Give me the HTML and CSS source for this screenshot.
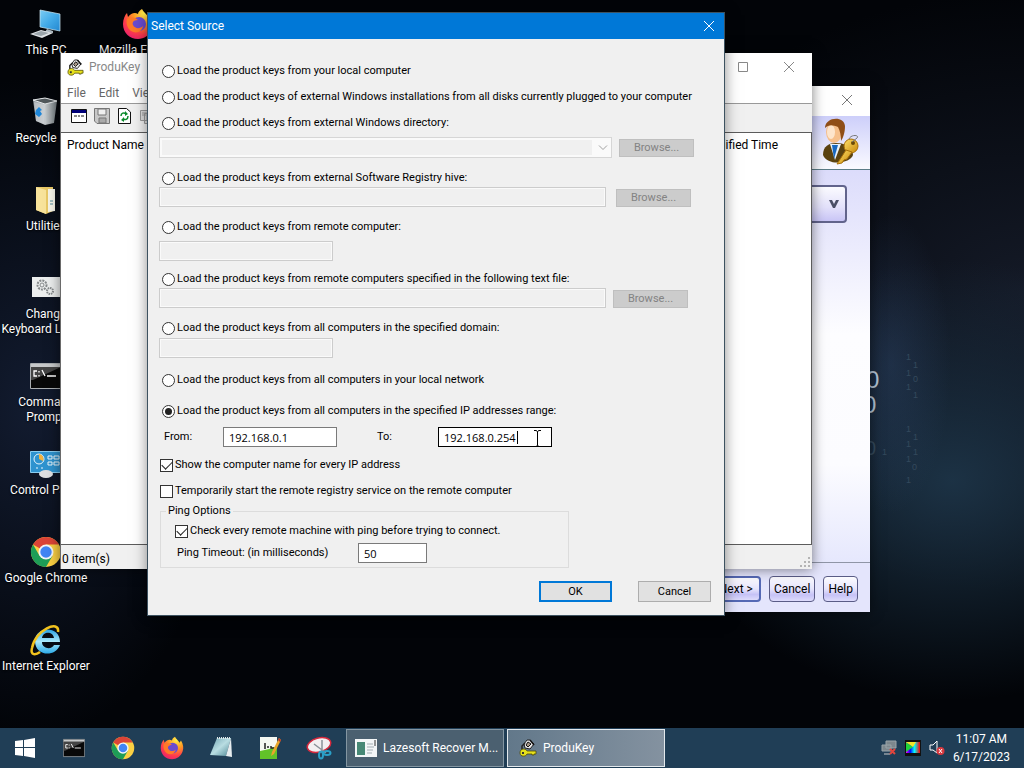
FILE: index.html
```html
<!DOCTYPE html>
<html lang="en">
<head>
<meta charset="utf-8">
<title>Select Source</title>
<meta name="viewport" content="width=device-width, initial-scale=1">
<link rel="stylesheet" href="styles.css">
</head>
<body>
<svg class="defs" width="0" height="0" aria-hidden="true">
  <defs>
    <linearGradient id="screen" x1="0" y1="0" x2="1" y2="1"><stop offset="0" stop-color="#7ccdf4"/><stop offset=".5" stop-color="#43abe8"/><stop offset="1" stop-color="#2387d0"/></linearGradient>
    <radialGradient id="fire" cx=".7" cy=".15" r="1"><stop offset="0" stop-color="#fff04a"/><stop offset=".35" stop-color="#ff9a22"/><stop offset=".7" stop-color="#ff3b4c"/><stop offset="1" stop-color="#e21a78"/></radialGradient>
    <linearGradient id="bin" x1="0" x2="1"><stop offset="0" stop-color="#8f979d"/><stop offset=".5" stop-color="#c5cacd"/><stop offset="1" stop-color="#6f777c"/></linearGradient>
    <linearGradient id="note" x1="0" y1="0" x2="1" y2="1"><stop offset="0" stop-color="#6fa2b0"/><stop offset=".5" stop-color="#b9dde2"/><stop offset="1" stop-color="#4d8794"/></linearGradient>
    <linearGradient id="gold" x1="0" y1="0" x2="1" y2="1"><stop offset="0" stop-color="#ffe26b"/><stop offset="1" stop-color="#c88708"/></linearGradient>
    <linearGradient id="ie" x1="0" y1="0" x2="0" y2="1"><stop offset="0" stop-color="#2aa3e4"/><stop offset=".5" stop-color="#a9e8fb"/><stop offset="1" stop-color="#2ba9e6"/></linearGradient>
    <linearGradient id="rainbow"><stop offset="0" stop-color="#f0f"/><stop offset=".3" stop-color="#00f"/><stop offset=".6" stop-color="#0ff"/><stop offset="1" stop-color="#f00"/></linearGradient>
    <symbol id="i-chrome" viewBox="0 0 32 32">
      <circle cx="16" cy="16" r="15" fill="#fbd043"/>
      <path d="M16 16 3 8.500A15 15 0 0 1 29 8.500H16Z" fill="#dc4437"/>
      <path d="M3 8.500A15 15 0 0 0 16 31L22.500 19.800 9.500 19.800Z" fill="#1e9d57"/>
      <circle cx="16" cy="16" r="7.500" fill="#f4f6f7"/><circle cx="16" cy="16" r="5.700" fill="#4285f4"/>
    </symbol>
    <symbol id="i-firefox" viewBox="0 0 32 32">
      <path d="M20 1c1 3 5 5 6 8l2-3c3 5 4 10 2 15-2 6-8 10-14 10C8 31 1 25 1 16 1 11 3 7 5 5l1 4c3-4 7-5 10-3 0-2 2-4 4-5Z" fill="url(#fire)"/>
      <circle cx="17" cy="16" r="7" fill="#6a4bd0"/>
      <path d="M5 11c4-3 8-2 11 1-5 0-6 3-5 5 2 4 7 4 10 1-1 6-7 8-12 5-4-3-5-8-4-12Z" fill="#ff7a28"/>
    </symbol>
    <symbol id="i-cmd" viewBox="0 0 32 26">
      <path fill="#080808" stroke="#a9adb0" d="M.5.5h31v25H.5z"/><path fill="#c7c9ca" d="M1 1h30v3H1z"/><path d="M1 4h30L3 17H1z" fill="#444"/>
      <path d="M7 8H4v5h3M9 8v1.500M9 12v1.500M12 7l3 6M17 13h9" fill="none" stroke="#fff" stroke-width="1.300"/>
    </symbol>
    <symbol id="i-key" viewBox="0 0 18 18">
      <path d="M8 1h3l4 4-4 5-5-1-1-4Z" fill="#e8e8e8" stroke="#222"/><path d="m9 3 3 2-3 3-2-2Z" fill="#a98" stroke="#111"/><path d="M6 4 3 7v4" fill="none" stroke="#222" stroke-width="1.500"/><path d="m11 1 4 5" stroke="#111" stroke-width="1.500"/>
      <path d="M4.500 10c2 0 3 1 3.500 2h9v3h-2v1h-2v-1H8c-1 3-7 3-7-1 0-2 1-4 3.500-4Z" fill="#e6e01b" stroke="#4f4a05" stroke-width=".8"/><path d="M3 13h2v2H3z" fill="#333"/>
    </symbol>
    <symbol id="i-close" viewBox="0 0 12 12"><path d="m1 1 10 10M11 1 1 11" fill="none" stroke="currentColor"/></symbol>
  </defs>
</svg>

<main class="desktop">
  <svg class="code-rain" width="70" height="180" viewBox="0 0 70 180" aria-hidden="true">
    <g fill="#b4c4d6"><text x="-4" y="36" font-size="24">0</text><text x="-7" y="61" font-size="24">0</text></g>
    <g fill="#34495c" font-size="9"><text x="-5" y="103" font-size="20">0</text><text x="12" y="103">1</text><text x="36" y="8">1</text><text x="43" y="16">1</text><text x="36" y="24">1</text><text x="43" y="30">0</text><text x="36" y="38">1</text><text x="43" y="46">1</text><text x="36" y="80">1</text><text x="43" y="88">1</text><text x="36" y="95">1</text><text x="43" y="103">1</text><text x="36" y="110">1</text><text x="42" y="118">0</text><text x="36" y="131">1</text></g>
  </svg>

  <nav class="shortcuts" aria-label="Desktop">
    <a class="shortcut" href="#"><svg width="32" height="32" viewBox="0 0 32 32"><path d="m10 2 20 4v17l-20-4Z" fill="url(#screen)" stroke="#cfe9f5" stroke-width=".7"/><path d="m17 21 6 2v2l-8-1Z" fill="#aab7bf"/><path d="m0 26 11-4 12 3-11 5Z" fill="#dfe3e6"/><path d="m3 26 8-3 8 2-8 3Z" fill="#9ba5ab"/></svg><span>This PC</span></a>
    <a class="shortcut" href="#"><svg width="32" height="32" viewBox="0 0 32 32"><path d="m3 4 12-2 12 3-3 22-9 2-9-4Z" fill="url(#bin)"/><path d="m3 4 12-2 12 3-12 3Z" fill="#50575b" stroke="#e2e5e7"/><path d="m15 9-1 19-8-3L4 6Z" fill="#d3d7da" opacity=".55"/><path d="m6 14 3-3 3 3-2 1 2 3-3 3-4-3Z" fill="#1e86d8"/></svg><span>Recycle Bin</span></a>
    <a class="shortcut" href="#"><svg width="32" height="32" viewBox="0 0 32 32"><path d="M6 3h17v24l-7 3-10-4Z" fill="#e9c967"/><path d="M6 3 16 6v24L6 26Z" fill="#f8e39b"/><path d="M18 5h7v22l-7 1Z" fill="#f6f4e8"/><path d="M20 17h3M20 20h3" stroke="#528a9a"/></svg><span>Utilities</span></a>
    <a class="shortcut" href="#"><svg width="32" height="32" viewBox="0 0 32 32"><path d="M2 5h30v20H2z" fill="#eceeee"/><g fill="none" stroke="#85898b"><circle cx="12" cy="13" r="4.500" stroke-width="2" stroke-dasharray="2 1"/><circle cx="12" cy="13" r="2"/><circle cx="20" cy="19" r="3" stroke-width="2" stroke-dasharray="1.500 .8"/></g></svg><span>Change Keyboard Layout</span></a>
    <a class="shortcut" href="#"><svg width="32" height="32"><use href="#i-cmd"/></svg><span>Command Prompt</span></a>
    <a class="shortcut" href="#"><svg width="32" height="32" viewBox="0 0 32 32"><path d="M.5 3.500h31v21H.5z" fill="#2e93cf" stroke="#8acdf0"/><circle cx="9" cy="11" r="5" fill="none" stroke="#e8f5fc"/><path d="M9 11V6a5 5 0 0 1 4 7Z" fill="#f3b23c"/><path d="M18 8h4v3h-4zM24 8h5v3h-5zM18 14h4v3h-4zM24 14h5v3h-5zM6 20h2M11 20h2" fill="none" stroke="#eaf6fc"/><ellipse cx="16" cy="26" rx="7" ry="4" fill="#dfe1e2"/></svg><span>Control Panel</span></a>
    <a class="shortcut" href="#"><svg width="32" height="32"><use href="#i-chrome"/></svg><span>Google Chrome</span></a>
    <a class="shortcut" href="#"><svg width="32" height="32" viewBox="0 0 32 32"><path d="M30 18H12c0 7 10 8 12 3h6c-5 13-25 11-25-4C5 2 30 1 30 18ZM12 14h12c-1-7-11-7-12 0Z" fill="url(#ie)"/><path d="M28 8C30-5 5 6 2 24c-2 8 4 7 8 4" fill="none" stroke="#f1c21e" stroke-width="2.500"/></svg><span>Internet Explorer</span></a>
    <a class="shortcut" href="#"><svg width="32" height="32"><use href="#i-firefox"/></svg><span>Mozilla Firefox</span></a>
  </nav>

  <section class="window wizard" aria-label="Lazesoft Recover My Password">
    <header class="wizard-title"><button class="caption-btn" aria-label="Close"><svg width="12" height="12"><use href="#i-close"/></svg></button></header>
    <div class="wizard-banner">
      <svg width="40" height="48" viewBox="0 0 40 48"><path d="M3 38c0-9 6-12 13-12s17 3 17 12c-2 8-25 12-30 0Z" fill="#5b4310"/><path d="m10 27 5 16 6-16Z" fill="#e8f2fb"/><path d="m12 28 2 14 4-14Z" fill="#1768c0"/><ellipse cx="14" cy="15" rx="8" ry="11" fill="#f6c08c"/><ellipse cx="11" cy="15" rx="4" ry="7" fill="#fde5cc"/><path d="M5 11C5 0 24-2 25 9c0 7-2 12-4 15 0-6-1-10-3-14C13 8 9 7 5 11Z" fill="#8f4e17"/><circle cx="31" cy="29" r="7" fill="url(#gold)" stroke="#a86f08"/><path d="m26 33-9 14 5-1 2-3 3-1 5-7Z" fill="url(#gold)" stroke="#a86f08"/><circle cx="33" cy="26" r="2" fill="#6b4a08"/><path d="M29 22c2-5 11-4 8-1l-5 4" fill="none" stroke="#777"/></svg>
    </div>
    <div class="wizard-body"><button class="wizard-select" aria-label="Choose volume"><svg width="12" height="10" viewBox="0 0 12 10"><path d="M1 1h3l2 4 2-4h3L7 9H5Z" fill="#4b4f66"/></svg></button></div>
    <footer class="wizard-footer"><button class="wiz-btn wiz-default">Next &gt;</button><button class="wiz-btn">Cancel</button><button class="wiz-btn">Help</button></footer>
  </section>

  <section class="window produkey" aria-label="ProduKey">
    <header class="pk-title"><svg width="17" height="17"><use href="#i-key"/></svg><h2>ProduKey</h2>
      <button class="caption-btn" aria-label="Maximize"><svg width="12" height="12"><path d="M1.500 1.500h9v9h-9z" fill="none" stroke="currentColor"/></svg></button>
      <button class="caption-btn" aria-label="Close"><svg width="12" height="12"><use href="#i-close"/></svg></button>
    </header>
    <nav class="pk-menu"><button>File</button><button>Edit</button><button>View</button></nav>
    <div class="pk-toolbar">
      <button aria-label="Select source"><svg width="16" height="16"><path d="M.5 1.500h15v13H.5z" fill="#fff" stroke="#111"/><path d="M1 2h14v3H1z" fill="#000078"/><path d="M3 8h3M7 8h2M10 8h3" stroke="#111"/></svg></button>
      <button aria-label="Save"><svg width="16" height="16"><path d="M.5.500h15v15H3l-2.500-2.500Z" fill="#c8c8c8" stroke="#777"/><path d="M4 1h8v6H4z" fill="#efefef" stroke="#777"/><path d="M5 10h7v5H5z" fill="#aaa" stroke="#777"/></svg></button>
      <button aria-label="Refresh"><svg width="16" height="16"><path d="M1.500.500h8l4 3.500v11.500h-12z" fill="#fff" stroke="#111"/><path d="M4 8c0-3 3-4 5-2M11 8c0 4-3 4-5 3" fill="none" stroke="#0a8a2a" stroke-width="1.500"/><path d="M8 3v5l3-2ZM7 9v5l-3-2Z" fill="#0a8a2a"/></svg></button>
      <button aria-label="Copy"><svg width="16" height="16"><path d="M.5 2.500h8v10h-8zM4.500 5.500h8v10h-8zM2 5h5M2 7h5M6 9h5M6 11h5" fill="#ddd" stroke="#999"/></svg></button>
    </div>
    <div class="pk-list"><table><thead><tr><th>Product Name</th><th>Modified Time</th></tr></thead></table></div>
    <footer class="pk-status"><span>0 item(s)</span><svg width="10" height="10"><path d="M8 0h2v2H8zM8 4h2v2H8zM8 8h2v2H8zM4 4h2v2H4zM4 8h2v2H4zM0 8h2v2H0z" fill="#b4b4b4"/></svg></footer>
  </section>

  <form class="window dialog" role="dialog" aria-labelledby="dlg-title" onsubmit="return false">
    <header class="dlg-title"><h1 id="dlg-title">Select Source</h1><button type="button" class="caption-btn" aria-label="Close"><svg width="12" height="12"><use href="#i-close"/></svg></button></header>
    <div class="dlg-body">
      <label class="option"><input type="radio" name="src">Load the product keys from your local computer</label>
      <label class="option gap-m"><input type="radio" name="src">Load the product keys of external Windows installations from all disks currently plugged to your computer</label>
      <label class="option gap-m"><input type="radio" name="src">Load the product keys from external Windows directory:</label>
      <div class="field field-combo"><span class="combo"><select disabled aria-label="Windows directory"><option></option></select><svg class="chevron" width="10" height="6"><path d="m1 .5 4 4 4-4" fill="none" stroke="#a0a0a0"/></svg></span><button type="button" class="browse" disabled>Browse...</button></div>
      <label class="option gap-l"><input type="radio" name="src">Load the product keys from external Software Registry hive:</label>
      <div class="field field-hive"><input type="text" disabled aria-label="Registry hive"><button type="button" class="browse" disabled>Browse...</button></div>
      <label class="option gap-l"><input type="radio" name="src">Load the product keys from remote computer:</label>
      <div class="field field-host"><input type="text" class="short" disabled aria-label="Remote computer"></div>
      <label class="option gap-m"><input type="radio" name="src">Load the product keys from remote computers specified in the following text file:</label>
      <div class="field field-file"><input type="text" disabled aria-label="Text file"><button type="button" class="browse" disabled>Browse...</button></div>
      <label class="option gap-l"><input type="radio" name="src">Load the product keys from all computers in the specified domain:</label>
      <div class="field field-domain"><input type="text" class="short" disabled aria-label="Domain"></div>
      <label class="option gap-xl"><input type="radio" name="src">Load the product keys from all computers in your local network</label>
      <label class="option gap-xl"><input type="radio" name="src" checked>Load the product keys from all computers in the specified IP addresses range:</label>
      <div class="range">
        <label for="from">From:</label><input id="from" type="text" value="192.168.0.1">
        <label for="to" class="range-to">To:</label>
        <span class="edit"><input id="to" class="active" type="text" value="192.168.0.254"><i class="caret"></i><svg class="ibeam" width="9" height="17"><path d="M1 .5h2.500L4.500 2l1-1.500H8M4.500 2v13M1 16.500h2.500l1-1.500 1 1.500H8" fill="none" stroke="#000"/></svg></span>
      </div>
      <label class="check gap-m"><input type="checkbox" checked>Show the computer name for every IP address</label>
      <label class="check gap-m"><input type="checkbox">Temporarily start the remote registry service on the remote computer</label>
      <fieldset class="ping">
        <legend>Ping Options</legend>
        <label class="check"><input type="checkbox" checked>Check every remote machine with ping before trying to connect.</label>
        <div class="timeout"><label for="timeout">Ping Timeout: (in milliseconds)</label><input id="timeout" type="text" value="50"></div>
      </fieldset>
      <div class="actions"><button class="push primary">OK</button><button type="button" class="push">Cancel</button></div>
    </div>
  </form>
</main>

<footer class="taskbar">
  <div class="pins">
    <button aria-label="Start"><svg width="22" height="22"><path d="m1 4 8-1v7H1ZM10 3l11-2v9H10ZM1 11h8v8l-8-1ZM10 11h11v10l-11-2Z" fill="#fff"/></svg></button>
    <button aria-label="Command Prompt"><svg width="22" height="22"><use href="#i-cmd"/></svg></button>
    <button aria-label="Google Chrome"><svg width="24" height="24"><use href="#i-chrome"/></svg></button>
    <button aria-label="Firefox"><svg width="24" height="24"><use href="#i-firefox"/></svg></button>
    <button aria-label="Notepad"><svg width="24" height="24"><path d="M8 2h14l-5 18-16-1Z" fill="url(#note)"/><path d="m22 2 1 19-6-1Z" fill="#e7edef"/><path d="M8 2h14" stroke="#dfe8ea" stroke-width="2" stroke-dasharray="1 1"/></svg></button>
    <button aria-label="Text editor"><svg width="24" height="24"><path d="M2 1h17v22H2z" fill="#f5f8f2"/><path d="M2 15q9-1 17-5v13H2z" fill="#62c229"/><path d="M7 7v6M10 10v2M13 10v2h3" stroke="#222" stroke-width="1.500" fill="none"/><path d="m21 2 2 2-7 14-3 2 1-4Z" fill="#e9a52a"/><path d="m21 2 2 2-1 2-2-2Z" fill="#b93428"/></svg></button>
    <button aria-label="Snipping Tool"><svg width="26" height="26"><ellipse cx="13" cy="10" rx="12" ry="7" fill="#f2f0f1" stroke="#d7293d" stroke-width="1.500" transform="rotate(-15 13 10)"/><path d="m8 9 12 9M16 5v12" stroke="#8a9299" stroke-width="1.500"/><g fill="none" stroke="#2aa0c8" stroke-width="2"><ellipse cx="15" cy="20" rx="2" ry="3.500"/><ellipse cx="21" cy="18" rx="3.500" ry="2"/></g></svg></button>
  </div>
  <div class="tasks">
    <button class="task"><svg width="22" height="20"><path d="M0 1h22v18H0z" fill="#f3f6f7"/><path d="M2 4h8v13H2z" fill="#478875"/><path d="M12 6h6M12 9h7M12 12h6M12 15h5" stroke="#a3adb3"/><path d="M20 2v6" stroke="#333"/></svg><span>Lazesoft Recover M...</span></button>
    <button class="task current"><svg width="18" height="18"><use href="#i-key"/></svg><span>ProduKey</span></button>
  </div>
  <div class="tray">
    <svg width="16" height="16"><path d="M5 1h10v7H5zM1 5h9v6H1z" fill="#7d878d" stroke="#9aa4a9"/><path d="M3 14h6" stroke="#ccc"/><path d="m9 9 5 5M14 9l-5 5" stroke="#e2453d" stroke-width="2"/></svg>
    <svg width="16" height="16"><path fill="#111" d="M0 0h16v16H0z"/><path fill="url(#rainbow)" d="M1 2h14v11H1z"/><path fill="#1fd33a" d="m1 2 7 5-7 5Z"/><path fill="#f4e52a" d="M1 2h10L8 7Z"/></svg>
    <svg width="16" height="16"><path d="M1 5h3l4-4v12L4 10H1Z" fill="none" stroke="#fff"/><circle cx="11.500" cy="11" r="4" fill="#d83a40"/><path d="m10 9 3 4M13 9l-3 4" stroke="#fff"/></svg>
    <time class="clock"><span>11:07 AM</span><span>6/17/2023</span></time>
  </div>
</footer>
</body>
</html>
```
FILE: styles.css
```css
* { box-sizing: border-box; }

body {
  margin: 0;
  min-height: 100vh;
  display: flex;
  flex-direction: column;
  overflow: hidden;
  background: #020408;
  color: #000;
  font: 12px/16px Roboto, "Open Sans", sans-serif;
}

button, input, select { font: inherit; color: inherit; margin: 0; }
button { padding: 0; border: 0; background: none; }
h1, h2 { margin: 0; font-size: 12px; font-weight: 400; }
svg { display: block; flex: none; }
.defs { position: absolute; }

/* Desktop */
.desktop {
  position: relative;
  flex: 1;
  min-height: 0;
  background:
    radial-gradient(ellipse 60px 150px at 87% 50%, rgba(48, 72, 110, .4), transparent),
    radial-gradient(ellipse 280px 220px at 93% 66%, rgba(30, 54, 74, .9), transparent),
    radial-gradient(ellipse 200px 330px at 3% 56%, rgba(20, 30, 52, .9), transparent),
    radial-gradient(ellipse 400px 300px at 100% 40%, rgba(22, 28, 42, .9), transparent),
    #020408;
}

.code-rain {
  position: absolute;
  right: 84px;
  top: 352px;
  overflow: visible;
  font-family: "Liberation Sans", sans-serif;
}

.shortcuts {
  display: grid;
  grid-auto-flow: column;
  grid-template-rows: repeat(8, 88px);
  grid-auto-columns: 92px;
  width: 184px;
}

.shortcut {
  display: flex;
  flex-direction: column;
  align-items: center;
  gap: 3px;
  padding-top: 8px;
  color: #fff;
  line-height: 15px;
  text-align: center;
  text-decoration: none;
  text-shadow: 0 1px 2px #000;
}

.window { position: absolute; box-shadow: 0 0 12px rgba(0, 0, 0, .5); }
.caption-btn { display: grid; place-items: center; width: 46px; height: 28px; }

/* Wizard */
.wizard {
  left: 150px;
  right: 154px;
  top: 86px;
  background: #e4e5fc;
}
.wizard-title { display: flex; justify-content: flex-end; height: 30px; background: #fff; color: #777; }
.wizard-banner {
  display: flex;
  justify-content: flex-end;
  padding: 1px 10px 4px;
  border-bottom: 1px solid #5b7c87;
  background: linear-gradient(#cdcffa, #fafaff);
}
.wizard-body {
  display: flex;
  justify-content: flex-end;
  align-items: flex-start;
  height: 393px;
  padding: 15px 23px;
  border-bottom: 1px solid #8f95a6;
  background: linear-gradient(#dcdcfb, #fdfdff 42%, #fcfcff 75%, #e6e8fd);
}
.wizard-select {
  display: flex;
  justify-content: flex-end;
  align-items: center;
  width: 300px;
  height: 38px;
  padding-right: 5px;
  border: 2px solid #62648c;
  border-radius: 4px;
  background: linear-gradient(#fbfbff, #e3e1fb 60%, #c9c5f6);
}
.wizard-footer { display: flex; justify-content: flex-end; gap: 8px; padding: 13px 12px 10px; }
.wiz-btn {
  height: 26px;
  padding: 0 4px;
  border: 1px solid #5a5c86;
  border-radius: 4px;
  background: linear-gradient(#fcfcff, #e6e4fc 50%, #c6c2f6 75%, #dedcfc);
}
.wiz-default { padding: 0 6px; border: 2px solid #5569b5; }

/* ProduKey */
.produkey {
  left: 60px;
  right: 212px;
  top: 53px;
  border-left: 1px solid #6a6a6a;
  background: #f0f0f0;
}
.pk-title { display: flex; align-items: center; height: 28px; padding-left: 6px; background: #fff; color: #888; }
.pk-title h2 { flex: 1; padding-left: 5px; }
.pk-menu { display: flex; gap: 13px; height: 22px; padding-left: 6px; background: #fff; color: #666; }
.pk-menu button { height: 24px; }
.pk-toolbar { display: flex; gap: 7px; height: 29px; padding: 4px 10px 8px; border-top: 1px solid #999; }
.pk-list { height: 413px; border: 1px solid #5c5c5c; border-left: 0; background: #fff; }
.pk-list table { width: 100%; border-collapse: collapse; }
.pk-list th { padding: 4px 33px 4px 6px; font-weight: 400; text-align: left; }
.pk-list th:last-child { text-align: right; }
.pk-status { display: flex; justify-content: space-between; align-items: flex-end; height: 24px; padding: 0 2px 2px 1px; }

/* Select Source dialog */
.dialog {
  left: 148px;
  right: 300px;
  top: 13px;
  background: #f0f0f0;
  box-shadow: 0 0 0 1px #3d5260, 0 2px 14px rgba(0, 0, 0, .5);
  font-size: 11px;
}
.dlg-title { display: flex; align-items: center; justify-content: space-between; height: 26px; padding-left: 3px; background: #0078d7; color: #fff; }
.dlg-title .caption-btn { width: 30px; height: 26px; }
.dlg-body { display: flex; flex-direction: column; padding: 24px 0 13px 11px; }

.option, .check { display: flex; align-items: center; gap: 2px; height: 16px; white-space: nowrap; }
.option { padding-left: 3px; }
.check { padding-left: 1px; }
.gap-m { margin-top: 10px; }
.gap-l { margin-top: 12px; }
.gap-xl { margin-top: 14px; }
.gap-xl + .gap-xl { margin-top: 15px; }

input[type="radio"], input[type="checkbox"] {
  appearance: none;
  display: grid;
  place-items: center;
  width: 13px;
  height: 13px;
  border: 1px solid #333;
  background: #fff;
}
input[type="radio"] { border-radius: 50%; }
input[type="radio"]:checked::after { content: ""; width: 7px; height: 7px; border-radius: 50%; background: #222; }
input[type="checkbox"]:checked::after {
  content: "";
  width: 9px;
  height: 5px;
  margin-bottom: 3px;
  border: solid #222;
  border-width: 0 0 1px 1px;
  transform: rotate(-45deg);
}

input[type="text"] {
  min-width: 0;
  height: 20px;
  padding: 0 5px;
  border: 1px solid #7a7a7a;
  border-radius: 0;
  background: #fff;
  font-family: "Open Sans", sans-serif;
}
input[type="text"]:disabled { border-color: #ccc; background: #f0f0f0; box-shadow: inset 0 0 0 1px #fafafa; }
input.active { border-color: #000; }

.field { display: flex; align-items: flex-end; }
.field > input, .combo { flex: 1; }
.field > .short { flex: 0 0 174px; }
.field-combo { align-items: center; gap: 7px; margin-top: 6px; padding-right: 30px; }
.field-hive { gap: 10px; margin-top: 1px; padding-right: 33px; }
.field-file { gap: 7px; margin-top: 1px; padding-right: 36px; }
.field-host { margin-top: 6px; }
.field-domain { margin-top: 2px; }

.combo { position: relative; display: flex; }
.chevron { position: absolute; right: 4px; top: 8px; }
select {
  appearance: none;
  width: 100%;
  height: 21px;
  border: 1px solid #ccc;
  border-radius: 0;
  background: linear-gradient(#f0f0f0, #f0f0f0) 2px 2px / calc(100% - 21px) 15px no-repeat, #fff;
}

.browse { width: 75px; height: 18px; border: 1px solid #bfbfbf; background: #ccc; color: #838383; line-height: 16px; }

.range { display: grid; grid-template-columns: 59px 114px 101px 114px; align-items: center; margin-top: 8px; padding-left: 5px; }
.range-to { padding-left: 40px; }
.edit { position: relative; display: flex; }
.edit input { width: 100%; }
.caret { position: absolute; left: 79px; top: 4px; width: 1px; height: 13px; background: #000; }
.ibeam { position: absolute; left: 95px; top: 3px; }

.ping { position: relative; width: 409px; height: 57px; margin: 12px 0 0 1px; padding: 0 0 0 14px; border: 1px solid #dcdcdc; }
.ping legend { position: absolute; left: 5px; top: -9px; padding: 0 2px; background: #f0f0f0; }
.ping .check { margin-top: 11px; padding-left: 0; }
.timeout { display: grid; grid-template-columns: 181px 69px; align-items: center; margin-top: 4px; padding-left: 2px; }
.actions { display: flex; justify-content: flex-end; gap: 26px; margin-top: 13px; padding-right: 13px; }
.push { width: 73px; height: 21px; border: 1px solid #adadad; background: #e1e1e1; line-height: 18px; }
.primary { border: 2px solid #0078d7; }

/* Taskbar */
.taskbar {
  display: flex;
  align-items: center;
  height: 40px;
  background: #203e56;
  color: #fff;
}
.pins { display: flex; width: 346px; }
.pins button { display: grid; place-items: center; flex: 0 0 49px; height: 40px; }
.tasks { display: flex; flex: 1; gap: 3px; }
.task {
  display: flex;
  align-items: center;
  gap: 6px;
  width: 158px;
  height: 38px;
  padding-left: 8px;
  border: 1px solid #8496a2;
  background: #4b6070;
  white-space: nowrap;
}
.current { padding-left: 11px; border-color: #e3e9ed; background: linear-gradient(90deg, #62788a, #8492a0); }
.tray { display: flex; align-items: center; gap: 8px; padding-right: 14px; }
.clock { display: flex; flex-direction: column; align-items: center; line-height: 18px; }
```
